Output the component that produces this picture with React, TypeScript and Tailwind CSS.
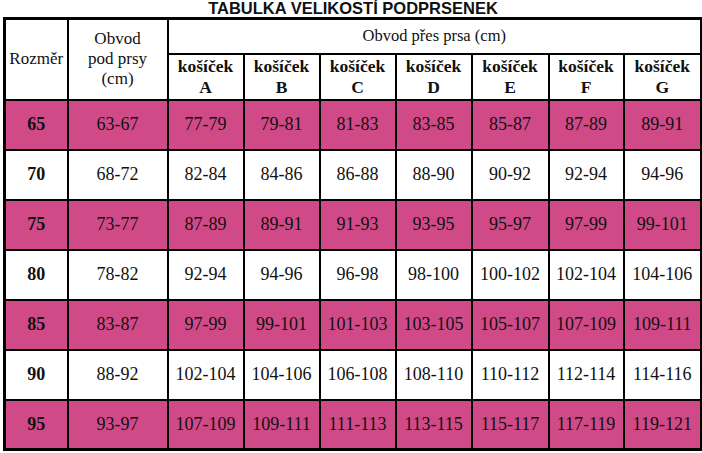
const CUPS = ["A", "B", "C", "D", "E", "F", "G"];

const ROWS: { size: string; under: string; vals: string[] }[] = [
  { size: "65", under: "63-67", vals: ["77-79", "79-81", "81-83", "83-85", "85-87", "87-89", "89-91"] },
  { size: "70", under: "68-72", vals: ["82-84", "84-86", "86-88", "88-90", "90-92", "92-94", "94-96"] },
  { size: "75", under: "73-77", vals: ["87-89", "89-91", "91-93", "93-95", "95-97", "97-99", "99-101"] },
  { size: "80", under: "78-82", vals: ["92-94", "94-96", "96-98", "98-100", "100-102", "102-104", "104-106"] },
  { size: "85", under: "83-87", vals: ["97-99", "99-101", "101-103", "103-105", "105-107", "107-109", "109-111"] },
  { size: "90", under: "88-92", vals: ["102-104", "104-106", "106-108", "108-110", "110-112", "112-114", "114-116"] },
  { size: "95", under: "93-97", vals: ["107-109", "109-111", "111-113", "113-115", "115-117", "117-119", "119-121"] },
];

const cell = "border-2 border-black text-center align-middle p-0";

export default function App() {
  return (
    <div className="w-[702px] h-[453px] bg-white overflow-hidden text-[#111]">
      <h1 className="h-[17px] text-center text-[16.5px] leading-[17px] font-bold font-['Liberation_Sans',Arial,sans-serif] pl-[4px]">
        TABULKA VELIKOSTÍ PODPRSENEK
      </h1>
      <table className="ml-[3px] border-collapse border-[3px] border-black table-fixed w-[697px] font-['Liberation_Serif','Times_New_Roman',serif]">
        <colgroup>
          <col className="w-[63px]" />
          <col className="w-[100px]" />
          <col className="w-[76px]" />
          <col className="w-[76px]" />
          <col className="w-[76px]" />
          <col className="w-[76px]" />
          <col className="w-[77px]" />
          <col className="w-[75px]" />
          <col className="w-[78px]" />
        </colgroup>
        <thead>
          <tr className="h-[35px]">
            <th rowSpan={2} className={`${cell} font-normal text-[17px] leading-[20px]`}>
              Rozměr
            </th>
            <th rowSpan={2} className={`${cell} font-normal text-[17px] leading-[20px]`}>
              Obvod
              <br />
              pod prsy
              <br />
              (cm)
            </th>
            <th colSpan={7} className={`${cell} font-normal text-[16.5px] leading-[20px]`}>
              Obvod přes prsa (cm)
            </th>
          </tr>
          <tr className="h-[46px]">
            {CUPS.map((c) => (
              <th key={c} className={`${cell} font-bold text-[17.5px] leading-[21px] whitespace-nowrap`}>
                košíček
                <br />
                {c}
              </th>
            ))}
          </tr>
        </thead>
        <tbody>
          {ROWS.map((r, i) => (
            <tr key={r.size} className={`h-[50px] ${i % 2 === 0 ? "bg-[#d14a88]" : "bg-white"}`}>
              <td className={`${cell} font-bold text-[18px]`}>{r.size}</td>
              <td className={`${cell} text-[18px]`}>{r.under}</td>
              {r.vals.map((v, j) => (
                <td key={j} className={`${cell} text-[18px] whitespace-nowrap`}>
                  {v}
                </td>
              ))}
            </tr>
          ))}
        </tbody>
      </table>
    </div>
  );
}
